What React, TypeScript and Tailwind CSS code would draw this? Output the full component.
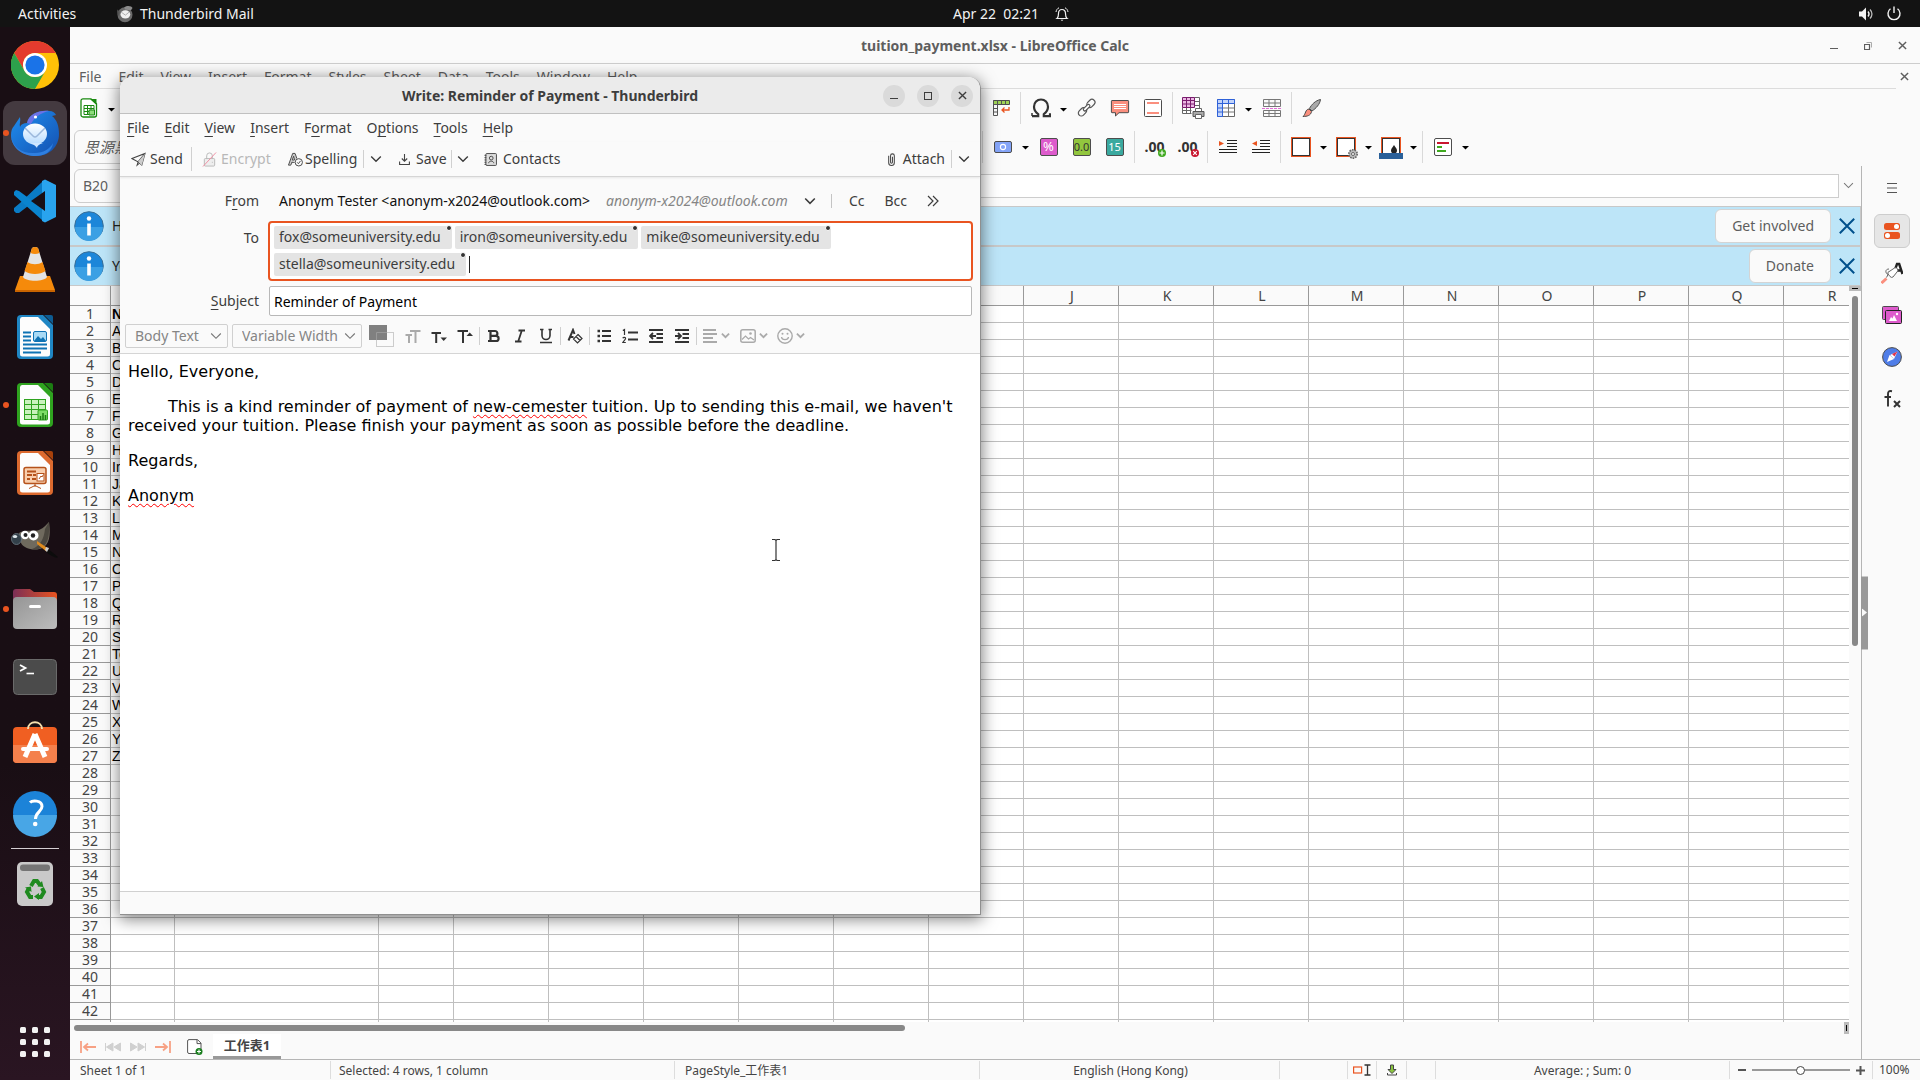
import type { ReactNode } from 'react';

const COLUMNS = [
  { name: 'A', width: 64 },
  { name: 'B', width: 204 },
  { name: 'C', width: 75 },
  ...'DEFGHIJKLMNOPQR'.split('').map((name) => ({ name, width: 95 })),
];

const NAMES = [
  'Name', 'Alex', 'Bob', 'Cathy', 'David', 'Ella', 'Fox', 'Grace', 'Henry', 'Iron', 'Jack', 'Kate', 'Lily', 'Mike',
  'Nancy', 'Oscar', 'Peter', 'Queen', 'Rose', 'Stella', 'Tom', 'Uma', 'Victor', 'Wendy', 'Xavier', 'Yolanda', 'Zoe',
];

const RECIPIENTS = ['fox', 'iron', 'mike', 'stella'].map((n) => `${n}@someuniversity.edu`);

/* ---------- small shared pieces ---------- */

function Icon({ size = 20, box = 20, children }: { size?: number; box?: number; children: ReactNode }) {
  return (
    <svg width={size} height={size} viewBox={`0 0 ${box} ${box}`} fill="none" className="shrink-0" aria-hidden="true">
      {children}
    </svg>
  );
}

function Chevron({ width = 12, color = '#3d3d3d', stroke = 1.4 }: { width?: number; color?: string; stroke?: number }) {
  return (
    <svg width={width} height={width} viewBox="0 0 12 12" fill="none" className="shrink-0" aria-hidden="true">
      <path d="M1.2 3.5 6 8.3l4.8-4.8" stroke={color} strokeWidth={stroke} />
    </svg>
  );
}

function CloseCross({ size = 10, color = '#5e5e5e', stroke = 1.6 }: { size?: number; color?: string; stroke?: number }) {
  return (
    <Icon size={size} box={10}>
      <path d="M1 1l8 8M9 1 1 9" stroke={color} strokeWidth={stroke} />
    </Icon>
  );
}

/* ---------- top bar ---------- */

function TopBar() {
  return (
    <header className="grid h-[27px] shrink-0 grid-cols-3 items-center bg-[#131313] text-sm text-[#f2f2f2]">
      <div className="flex items-center pl-[18px]">
        <button className="w-[98px] text-left">Activities</button>
        <button className="flex items-center gap-1.5">
          <Icon size={18} box={48}>
            <circle cx="24" cy="26" r="20" fill="#6b6b6b" />
            <path d="M22 6c8-6 20-4 22 2l-4 6-16-2z" fill="#8b8b8b" />
            <path d="M4 12l6 6-2 12c-5-5-6-12-4-18z" fill="#555" />
            <ellipse cx="25" cy="25" rx="13" ry="11" fill="#f0f0f0" />
            <path d="M14 19l11 8 10-8" stroke="#999" strokeWidth="2" />
          </Icon>
          Thunderbird Mail
        </button>
      </div>
      <button className="flex items-center justify-center gap-4 pl-[102px]">
        <span className="whitespace-pre">Apr 22  02:21</span>
        <Icon size={14} box={14}>
          <path d="M2 11.5h10c-1.300-1-1.500-2.500-1.500-5 0-2.500-1.500-4-3.500-4s-3.500 1.500-3.500 4c0 2.500-.2 4-1.500 5z" stroke="#f2f2f2" strokeWidth="1.200" />
          <path d="M1 5C1.300 3 2.300 1.500 4 .8M13 5c-.3-2-1.300-3.500-3-4.200" stroke="#f2f2f2" />
          <path d="M5.500 12.800h3L7 14z" fill="#f2f2f2" />
        </Icon>
      </button>
      <div className="flex items-center justify-end gap-3 pr-[18px]">
        <button aria-label="Volume">
          <Icon size={16} box={16}>
            <path d="M1 5.500h3L8 1.500v13L4 10.500H1z" fill="#f2f2f2" />
            <path d="M10 5.500c1.300 1.500 1.300 3.500 0 5" stroke="#f2f2f2" strokeWidth="1.300" />
            <path d="M12 3.500c2.600 2.600 2.600 6.400 0 9" stroke="#bbb" strokeWidth="1.300" />
          </Icon>
        </button>
        <button aria-label="Power">
          <Icon size={16} box={16}>
            <path d="M4.500 2.800a6 6 0 1 0 7 0M8 .5V7" stroke="#f2f2f2" strokeWidth="1.400" />
          </Icon>
        </button>
      </div>
    </header>
  );
}

/* ---------- dock ---------- */

function DocIcon({ dark, light, children }: { dark: string; light: string; children: ReactNode }) {
  return (
    <Icon size={48} box={48}>
      <path d="M10 2h22l10 10v30a4 4 0 0 1-4 4H10a4 4 0 0 1-4-4V6a4 4 0 0 1 4-4z" fill={light} />
      <path d="M11 4h16l12 12v25a2.500 2.500 0 0 1-2.500 2.500h-25A2.500 2.500 0 0 1 9 41V6.500A2.500 2.500 0 0 1 11 4z" fill="#fdfdfd" />
      <path d="M33 2h7a2 2 0 0 1 2 2v7z" fill={dark} />
      {children}
    </Icon>
  );
}

const chromeIcon = (
  <Icon size={48} box={48}>
    <circle cx="24" cy="24" r="24" fill="#ffc107" />
    <path d="M3.200 12A24 24 0 0 1 44.800 12H24a12 12 0 0 0-10.400 18z" fill="#e33b2e" />
    <path d="M3.200 12A24 24 0 0 0 24 48l10.400-18A12 12 0 0 1 13.600 30z" fill="#2da14c" />
    <circle cx="24" cy="24" r="12" fill="#fff" />
    <circle cx="24" cy="24" r="9.600" fill="#1a73e8" />
  </Icon>
);

const thunderbirdIcon = (
  <Icon size={48} box={48}>
    <defs>
      <linearGradient id="tb" x1="0" y1="0" x2="1" y2="1">
        <stop offset="0" stopColor="#1f8ff0" />
        <stop offset="1" stopColor="#1450b0" />
      </linearGradient>
      <linearGradient id="tbm" x1="0" y1="0" x2="0" y2="1">
        <stop offset="0" stopColor="#fff" />
        <stop offset="1" stopColor="#b8dcff" />
      </linearGradient>
    </defs>
    <path d="M16 14C18 5 28 1 38 2c4 0 6 2 7 4l-4 1c5 4 7 10 7 18 0 13-10 22-23 22S0 38 0 26c0-4 1-7 3-9l6-9c1 4-1 7 0 10 1-3 4-4 7-4z" fill="url(#tb)" />
    <path d="M0 25c1 14 12 20 24 19 8 0 15-4 18-10-1 9-9 13-17 13C11 47 0 39 0 25z" fill="#2f7fe0" />
    <path d="M16 14C18 5 28 1 38 2c-9 2-14 6-18 13z" fill="#7f6fe8" opacity=".8" />
    <ellipse cx="24" cy="25" rx="12" ry="10.500" fill="url(#tbm)" />
    <path d="M14 19l8 8q2 2 4 0l8-8" stroke="#9cb8dc" strokeWidth="1.500" />
    <path d="M20 34q5 3 6 5 0-3 6-5" fill="#cfe6ff" />
    <circle cx="24.500" cy="8" r="1.600" fill="#fff" />
  </Icon>
);

const vscodeIcon = (
  <Icon size={48} box={48}>
    <path d="M34 3l-3 1-22 21-6 5v3l2 2 3 0 26-20z" fill="#0a7bc5" transform="translate(0 1)" />
    <path d="M8 14L5 13l-2 2v3l28 25 3 2 0-12z" fill="#0a84cf" />
    <path d="M31 44V4l3-1.500L45 8v32l-11 5.500z" fill="#29a4ee" />
    <path d="M34 14v20L20 24z" fill="#190f15" />
  </Icon>
);

const vlcIcon = (
  <Icon size={48} box={48}>
    <path d="M9 31h30l5 14v2H4v-2z" fill="#f58a0b" />
    <path d="M4 45h40v2H4z" fill="#c96400" />
    <path d="M21 3q3-2 6 0l9 29c-3 5-21 5-24 0z" fill="#e4e4e4" />
    <path d="M21 3q3-2 6 0l1.500 5q-4.500 2-9 0zM16.500 17l-3 9c5 4 16 4 21 0l-3-9c-4 3-11 3-15 0z" fill="#f58a0b" />
  </Icon>
);

const gimpIcon = (
  <Icon size={48} box={48}>
    <path d="M8 16c6-4 14-1 20-3 5-2 8-6 10-8 1 8 2 20-5 25-8 5-20 2-23-4z" fill="#6f6a5e" />
    <path d="M38 5c0 8 1 18-5 24-3 3-8 4-12 3 8-3 12-10 13-20z" fill="#4b473f" />
    <ellipse cx="5.500" cy="22" rx="5" ry="5.500" fill="#33404a" stroke="#6d7b85" strokeWidth=".8" />
    <ellipse cx="4" cy="19.500" rx="2.200" ry="1.500" fill="#dfe7ec" />
    <circle cx="14" cy="18" r="4.200" fill="#fff" />
    <circle cx="22.500" cy="18.500" r="5" fill="#fff" />
    <circle cx="14.500" cy="18" r="2" fill="#222" />
    <circle cx="22" cy="18.500" r="2.200" fill="#222" />
    <path d="M26 24l12 8-2 3-10-8z" fill="#e08b1e" />
    <path d="M36 31l11 9c0 2-9-1-12-6z" fill="#0c0c0c" />
    <path d="M35 30l3 1-2 4-2-2z" fill="#ccc" />
  </Icon>
);

const filesIcon = (
  <Icon size={48} box={48}>
    <defs>
      <linearGradient id="fl" x1="0" y1="0" x2="1" y2="0">
        <stop offset="0" stopColor="#7b2f56" />
        <stop offset="1" stopColor="#e95420" />
      </linearGradient>
      <linearGradient id="flg" x1="0" y1="0" x2="1" y2="1">
        <stop offset="0" stopColor="#959595" />
        <stop offset="1" stopColor="#bdbdbd" />
      </linearGradient>
    </defs>
    <path d="M2 7a3 3 0 0 1 3-3h14l4 3h20a3 3 0 0 1 3 3v10H2z" fill="url(#fl)" />
    <rect x="2" y="12" width="44" height="32" rx="4" fill="url(#flg)" />
    <rect x="18" y="20" width="12" height="3" rx="1.500" fill="#fff" />
  </Icon>
);

const terminalIcon = (
  <Icon size={48} box={48}>
    <rect x="2.500" y="6.500" width="43" height="35" rx="4" fill="#4b4b4b" stroke="#6a6a6a" />
    <path d="M9 12l5.500 3L9 18" stroke="#fff" strokeWidth="1.800" />
    <path d="M15.500 20.500H23" stroke="#fff" strokeWidth="1.600" />
  </Icon>
);

const softwareIcon = (
  <Icon size={48} box={48}>
    <g transform="translate(0 -3)">
      <rect x="2" y="9" width="44" height="36" rx="4" fill="#f05f22" />
      <path d="M2 27h44v14a4 4 0 0 1-4 4H6a4 4 0 0 1-4-4z" fill="#f4804c" />
      <path d="M17 11c0-9 14-9 14 0" stroke="#f6dfae" strokeWidth="1.800" />
      <path d="M24 16L14 39M24 16l10 23" stroke="#fff" strokeWidth="5" />
      <rect x="10" y="29" width="28" height="4" rx="2" fill="#fff" />
    </g>
  </Icon>
);

const helpIcon = (
  <Icon size={48} box={48}>
    <circle cx="24" cy="24" r="22" fill="#1c83d8" />
    <path d="M2 26a22 22 0 0 0 44 0z" fill="#48a6e6" />
    <path d="M19 13.500c2-2 12-3 12 4 0 5-6.500 5.500-6.500 12.500" stroke="#fff" strokeWidth="3" />
    <circle cx="24.200" cy="35" r="2.300" fill="#fff" />
  </Icon>
);

const trashIcon = (
  <Icon size={48} box={48}>
    <rect x="6" y="2" width="36" height="44" rx="5" fill="#c9c9c9" />
    <rect x="9" y="4.500" width="30" height="6.500" rx="3" fill="#757575" />
    <g stroke="#1f8a1f" strokeWidth="4">
      <path d="M20 26l3-5h3l3 4" />
      <path d="M31 28l2 4-3 5h-4" />
      <path d="M22 37h-3l-3-5 2-4" />
    </g>
    <path d="M26.500 26.500l6 .5-1.500-6zM28 33v7l-5-3.500zM14 27.500l6-1 .5 5.500z" fill="#1f8a1f" />
  </Icon>
);

const gridIcon = (
  <Icon size={48} box={48}>
    {[9, 21, 33].map((y) => [9, 21, 33].map((x) => <rect key={`${x}-${y}`} x={x} y={y} width="6" height="6" rx="1.500" fill="#f2f2f2" />))}
  </Icon>
);

const writerIcon = (
  <DocIcon dark="#0d5c93" light="#1f86c4">
    <path d="M12 19.500h8M12 23.500h8M12 27.500h8M12 31.500h24M12 35.500h24M12 39.500h18" stroke="#0f73b4" strokeWidth="2" />
    <rect x="22.500" y="18.500" width="13" height="10" rx="1.500" fill="#a8daf5" stroke="#0f73b4" />
    <path d="M23 28l4-5 3 3 2-2 3 4z" fill="#0f73b4" />
  </DocIcon>
);

const calcIcon = (
  <DocIcon dark="#1c7d12" light="#2fa31f">
    <rect x="13.500" y="18.500" width="21" height="20" fill="#c9f2bd" stroke="#2fa31f" />
    <path d="M13 23.500h22M13 28.500h22M13 33.500h22M20.500 18v21M27.500 18v21" stroke="#2fa31f" />
    <rect x="27" y="29" width="9.500" height="10" rx="1" fill="#7ddc66" stroke="#2fa31f" />
    <path d="M29.500 39v-4M32 39v-7M34.500 39v-5" stroke="#1c7d12" strokeWidth="1.500" />
  </DocIcon>
);

const impressIcon = (
  <DocIcon dark="#a8410b" light="#dc6a2f">
    <rect x="13" y="18.500" width="22" height="16" rx="2" fill="#f9cfae" stroke="#b5521b" strokeWidth="1.500" />
    <path d="M16 22.500h9M16 26h5M22 26h3M16 30h3M21 30h4" stroke="#b5521b" strokeWidth="2" />
    <rect x="26" y="24.500" width="7" height="7.500" fill="#fff" stroke="#b5521b" />
    <path d="M28 30l2-3 1 1 1.500-2.500M24 35v3M18 39.500l6-3 6 3" stroke="#b5521b" />
  </DocIcon>
);

const DOCK = [
  { name: 'Chrome', icon: chromeIcon },
  { name: 'Thunderbird', icon: thunderbirdIcon, active: true, running: true },
  { name: 'VS Code', icon: vscodeIcon },
  { name: 'VLC', icon: vlcIcon },
  { name: 'Writer', icon: writerIcon },
  { name: 'Calc', icon: calcIcon, running: true },
  { name: 'Impress', icon: impressIcon },
  { name: 'GIMP', icon: gimpIcon },
  { name: 'Files', icon: filesIcon, running: true },
  { name: 'Terminal', icon: terminalIcon },
  { name: 'Software', icon: softwareIcon },
  { name: 'Help', icon: helpIcon },
];

function Dock() {
  return (
    <nav className="flex w-[70px] shrink-0 flex-col items-center bg-gradient-to-b from-[#190e14] from-70% to-[#2a1522] py-1.5">
      <div className="flex flex-col gap-1">
        {DOCK.map((app) => (
          <button
            key={app.name}
            aria-label={app.name}
            className={`relative flex size-16 items-center justify-center rounded-xl ${app.active ? 'bg-[#443a40]' : ''}`}
          >
            {app.running && <span className="absolute top-[29px] left-0 size-1.5 rounded-full bg-[#e95420]" />}
            {app.icon}
          </button>
        ))}
      </div>
      <hr className="my-[3px] w-12 border-[#d5cfd3]" />
      <button aria-label="Trash" className="flex size-16 items-center justify-center">{trashIcon}</button>
      <button aria-label="Show Applications" className="mt-auto flex size-16 items-center justify-center">{gridIcon}</button>
    </nav>
  );
}

/* ---------- calc toolbars ---------- */

function Tool({ label, children }: { label: string; children: ReactNode }) {
  return (
    <button aria-label={label} className="flex h-8 w-[33px] shrink-0 items-center justify-center">
      {children}
    </button>
  );
}

function Drop({ narrow }: { narrow?: boolean }) {
  return (
    <button aria-label="More" className={`flex h-8 shrink-0 items-center justify-center ${narrow ? 'w-3' : 'w-[13px]'}`}>
      <svg width="7" height="7" viewBox="0 0 7 7" aria-hidden="true">
        <path d="M0 3h7L3.500 6.500z" fill="#000" />
      </svg>
    </button>
  );
}

function ToolSep() {
  return <span className="mx-[3px] h-8 w-px shrink-0 bg-[#d9d9d9]" />;
}

function BorderBox({ children }: { children?: ReactNode }) {
  return (
    <Icon size={24} box={24}>
      <rect x="2.500" y="2.500" width="19" height="19" fill="#fff" stroke="#e95420" />
      <rect x="3.500" y="3.500" width="17" height="17" stroke="#333" />
      {children}
    </Icon>
  );
}

function CalcToolbars() {
  return (
    <>
      <div className="flex h-[38px] items-center">
        <div className="flex w-[914px] shrink-0 items-center pl-0.5">
          <Tool label="New">
            <Icon>
              <path d="M4 .8h8l5.500 5V17a2 2 0 0 1-2 2H4a2 2 0 0 1-2-2V2.800a2 2 0 0 1 2-2z" fill="#fff" stroke="#1a8a10" strokeWidth="1.300" />
              <path d="M11 1h6.500v6z" fill="#1a8a10" />
              <path d="M5 7.500h10v9H5zM5 10.500h10M5 13.500h10M8.500 7.500v9M12 7.500v9" stroke="#1a8a10" />
              <path d="M10 12h5.500v5H10z" fill="#8edc7c" stroke="#1a8a10" />
            </Icon>
          </Tool>
          <Drop />
        </div>
        <Tool label="Pivot Table">
          <Icon size={20}>
            <path d="M2.500 2.500h16v4h-16z" fill="#9fd355" stroke="#4d4d4d" />
            <path d="M6.500 2.500v15h-4v-15M2.500 6.500h4M2.500 10.500h4M2.500 14h4M10.500 3v3M14.500 3v3" stroke="#555" />
            <path d="M18 9v3h-7M13.500 9.500 11 12l2.500 2.500" stroke="#e95420" strokeWidth="1.300" />
          </Icon>
        </Tool>
        <ToolSep />
        <Tool label="Special Character">
          <Icon size={20}>
            <path d="M1 18.200h6.200v-2C4.500 14.300 3 12 3 8.800 3 4.500 6 1.500 10 1.500s7 3 7 7.300c0 3.200-1.500 5.500-4.200 7.400v2H19v-3" stroke="#333" strokeWidth="2.200" />
            <path d="M1 15v3" stroke="#333" strokeWidth="1.500" />
          </Icon>
        </Tool>
        <Drop />
        <Tool label="Hyperlink">
          <Icon size={20}>
            <g transform="rotate(-45 10 10)" stroke="#555" strokeWidth="1.200">
              <rect x="-.5" y="6.500" width="9" height="6" rx="3" />
              <rect x="11.500" y="6.500" width="9" height="6" rx="3" />
              <rect x="6" y="8" width="8" height="3" rx="1.500" fill="#fff" />
            </g>
          </Icon>
        </Tool>
        <Tool label="Comment">
          <Icon size={20}>
            <path d="M2 2.500h16a.6.600 0 0 1 .6.600v11a.6.600 0 0 1-.6.600H9L5.500 18v-3.300H2a.6.600 0 0 1-.6-.6v-11a.6.600 0 0 1 .6-.6z" fill="#fa8f7e" stroke="#4d4d4d" />
            <path d="M4 6.500h12M4 8.500h12M4 10.500h12" stroke="#fff" />
          </Icon>
        </Tool>
        <Tool label="Headers and Footers">
          <Icon size={20}>
            <rect x="1.500" y="1.500" width="17" height="17" rx="1" fill="#fff" stroke="#4d4d4d" />
            <path d="M4 5h12M4 15h12" stroke="#fa8f7e" strokeWidth="1.800" />
          </Icon>
        </Tool>
        <ToolSep />
        <Tool label="Print Area">
          <Icon size={24} box={24}>
            <path d="M1.500 1.500h17v16h-17z" fill="#fff" />
            <path d="M1.500 1.500h12v10h-12z" fill="#ebb8e4" />
            <path d="M13.500 1.500h5v12M1.500 11.500v6h9M13.500 5.500h5M13.500 9.500h5M1.500 14.500h9M5.500 12v5.500M9.500 12v5.500" stroke="#666" />
            <path d="M1.500 1.500h12v10h-12zM1.500 4.500h12M1.500 8h12M5.500 1.500v10M9.500 1.500v10" stroke="#7a1c6e" />
            <path d="M14.500 12.500h6v3h-6z" fill="#fff" stroke="#666" />
            <path d="M12 15.500h11v5H12z" fill="#aaa" stroke="#555" />
            <path d="M14.500 18.500h6v4h-6z" fill="#fff" stroke="#666" />
          </Icon>
        </Tool>
        <Tool label="Freeze Rows and Columns">
          <Icon size={20}>
            <path d="M1.500 1.500h17v17h-17z" fill="#fff" stroke="#666" />
            <path d="M1.500 1.500h17v4h-17zM1.500 5.500h5v13h-5z" fill="#c3d4fa" />
            <path d="M6.500 10h12M6.500 14h12M12.500 5.500v13" stroke="#777" />
            <path d="M1.500 18.500v-17h17v4h-17M1.500 10h5M1.500 14h5M6.500 1.500v17h-5M12.500 1.500v4" stroke="#2f62d9" />
          </Icon>
        </Tool>
        <Drop />
        <Tool label="Split Window">
          <Icon size={20}>
            <path d="M1.500 1.500h17v7h-17zM1.500 5h17M7 1.500v7M13 1.500v7M1.500 12.500h17v6h-17zM1.500 15.500h17M7 12.500v6M13 12.500v6" stroke="#777" />
            <path d="M0 10.500h20" stroke="#e06bd6" strokeDasharray="3 1" />
          </Icon>
        </Tool>
        <ToolSep />
        <Tool label="Show Draw Functions">
          <Icon size={20}>
            <path d="M18.500 1.500c-5 1-9 5-11 9l2.500 2.500c4-2.500 8-7 8.500-11.500z" fill="#aaa" stroke="#4d4d4d" />
            <path d="M7 11c-4 .5-3 5-6 7.500 4 0 8-1 8.500-5z" fill="#fa8f7e" stroke="#4d4d4d" />
          </Icon>
        </Tool>
      </div>

      <div className="flex h-[39px] items-center">
        <div className="flex w-[909px] shrink-0 items-center pl-1">
          <input
            aria-label="Font name"
            defaultValue="思源黑體"
            className="h-[34px] w-[230px] rounded-md border border-[#cdcdcd] bg-[#fafafa] px-[9px] text-[15px] text-[#5e5e5e] italic outline-none"
          />
        </div>
        <ToolSep />
        <Tool label="Currency">
          <Icon size={20}>
            <rect x="1.500" y="4.500" width="17" height="11" rx="1.500" fill="#84a4f8" stroke="#4d4d4d" />
            <circle cx="10" cy="10" r="2.600" stroke="#fff" strokeWidth="1.100" />
          </Icon>
        </Tool>
        <Drop />
        <Tool label="Percent">
          <span className="flex size-[18px] items-center justify-center rounded-xs border border-[#4d4d4d] bg-[#dd5bcc] text-[13px] leading-none text-white">%</span>
        </Tool>
        <Tool label="Number">
          <span className="flex size-[18px] items-center justify-center rounded-xs border border-[#4d4d4d] bg-[#92c63e] text-[11px] leading-none text-[#333]">0.0</span>
        </Tool>
        <Tool label="Date">
          <span className="flex size-[18px] items-center justify-center rounded-xs border border-[#4d4d4d] bg-[#3aa99f] text-[11px] leading-none text-white">15</span>
        </Tool>
        <ToolSep />
        <Tool label="Add Decimal Place">
          <span className="relative text-[14px] leading-5 font-bold text-[#333]">
            .00
            <svg className="absolute -right-0.5 bottom-0" width="8" height="8" viewBox="0 0 8 8" aria-hidden="true">
              <circle cx="4" cy="4" r="4" fill="#3fa91f" />
              <path d="M4 1.500v5M1.500 4h5" stroke="#fff" strokeWidth="1.200" />
            </svg>
          </span>
        </Tool>
        <Tool label="Delete Decimal Place">
          <span className="relative text-[14px] leading-5 font-bold text-[#333]">
            .00
            <svg className="absolute -right-0.5 bottom-0" width="8" height="8" viewBox="0 0 8 8" aria-hidden="true">
              <circle cx="4" cy="4" r="4" fill="#c9162f" />
              <path d="M2.200 2.200l3.600 3.600M5.800 2.200 2.200 5.800" stroke="#fff" strokeWidth="1.200" />
            </svg>
          </span>
        </Tool>
        <ToolSep />
        <Tool label="Increase Indent">
          <Icon size={20}>
            <path d="M9 3.500h10M9 6.500h10M9 9.500h10M1 12.500h18M1 15.500h18" stroke="#222" strokeWidth="1.200" />
            <path d="M1 4l5 2.500L1 9z" fill="#e95420" />
          </Icon>
        </Tool>
        <Tool label="Decrease Indent">
          <Icon size={20}>
            <path d="M9 3.500h10M9 6.500h10M9 9.500h10M1 12.500h18M1 15.500h18" stroke="#222" strokeWidth="1.200" />
            <path d="M6 4L1 6.500 6 9z" fill="#e95420" />
          </Icon>
        </Tool>
        <ToolSep />
        <Tool label="Borders">
          <BorderBox />
        </Tool>
        <Drop narrow />
        <Tool label="Border Style">
          <BorderBox>
            <circle cx="19" cy="19" r="4.200" fill="#bbb" stroke="#666" strokeDasharray="1.600 1" strokeWidth="1.600" />
            <circle cx="19" cy="19" r="1.500" fill="#fff" stroke="#666" />
          </BorderBox>
        </Tool>
        <Drop narrow />
        <Tool label="Border Color">
          <BorderBox>
            <path d="M15 10c2 3 3 4 3 5.500a3 3 0 0 1-6 0C12 14 13 13 15 10z" fill="#222" />
            <rect y="18" width="24" height="6" fill="#2a6099" />
          </BorderBox>
        </Tool>
        <Drop narrow />
        <ToolSep />
        <Tool label="Conditional">
          <Icon size={20}>
            <rect x="1.500" y="1.500" width="17" height="17" rx="1.500" fill="#fff" stroke="#4d4d4d" />
            <path d="M4 6h12" stroke="#c9162f" strokeWidth="2" />
            <path d="M4 10h5M4 14h9" stroke="#3fa91f" strokeWidth="2" />
          </Icon>
        </Tool>
        <Drop />
      </div>
    </>
  );
}

/* ---------- calc window ---------- */

function InfoBar({ text, action }: { text: string; action: string }) {
  return (
    <div className="flex h-10 items-center border-y border-r border-[#c8c8c8] bg-[#bde5f8] pr-1 pl-1">
      <Icon size={30} box={30}>
        <circle cx="15" cy="15" r="14.300" fill="#1c86d9" stroke="#3b6f96" />
        <path d="M1 16a14 14 0 0 0 28 0z" fill="#3ba0e4" />
        <path d="M15 12.500v12" stroke="#fff" strokeWidth="3.600" />
        <circle cx="15" cy="7.500" r="2.200" fill="#fff" />
      </Icon>
      <span className="ml-2 text-[#222]">{text}</span>
      <button className="mr-[7px] ml-auto h-[34px] rounded-md border border-[#d4d4d4] bg-[#fafafa] px-4 text-[#5e5e5e]">{action}</button>
      <button aria-label="Close" className="flex size-[18px] items-center justify-center">
        <CloseCross size={18} color="#00508c" stroke={1.1} />
      </button>
    </div>
  );
}

function Sheet() {
  return (
    <div className="min-w-0 flex-1 overflow-hidden bg-white">
      <table className="table-fixed border-separate border-spacing-0 leading-4 text-[#444]" style={{ width: 41 + COLUMNS.reduce((s, c) => s + c.width, 0) }}>
        <colgroup>
          <col className="w-[41px]" />
          {COLUMNS.map((c) => (
            <col key={c.name} style={{ width: c.width }} />
          ))}
        </colgroup>
        <thead>
          <tr>
            <th aria-label="Select all" className="h-5 border-r border-b border-[#999] bg-[#fafafa] p-0" />
            {COLUMNS.map((c) => (
              <th key={c.name} className="h-5 border-r border-b border-[#999] bg-[#fafafa] p-0 pl-0.5 font-normal">{c.name}</th>
            ))}
          </tr>
        </thead>
        <tbody>
          {Array.from({ length: 43 }, (_, row) => (
            <tr key={row}>
              <th className="h-[17px] border-r border-b border-[#999] bg-[#fafafa] p-0 font-normal">{row < 42 ? row + 1 : ''}</th>
              {COLUMNS.map((c, i) => (
                <td
                  key={c.name}
                  className={`overflow-hidden border-r border-b border-[#bfbfbf] p-0 pl-px font-['Liberation_Sans'] text-[14px] text-black ${row === 0 ? 'font-bold' : ''}`}
                >
                  {i === 0 ? NAMES[row] : ''}
                </td>
              ))}
            </tr>
          ))}
        </tbody>
      </table>
    </div>
  );
}

function SheetTabs() {
  return (
    <div className="flex h-[25px] items-center pl-2.5">
      <button aria-label="First sheet" className="w-[25px]">
        <Icon size={16} box={16}>
          <path d="M1 2v12M16 8H4M8 4.500 4 8l4 3.500" stroke="#f7a184" strokeWidth="1.800" />
        </Icon>
      </button>
      <button aria-label="Previous sheet" className="w-[25px]">
        <Icon size={16} box={16}>
          <path d="M.5 4v8M8 4v8L1.500 8zM15.500 4v8L9 8z" fill="#d0d0d0" stroke="#d0d0d0" />
        </Icon>
      </button>
      <button aria-label="Next sheet" className="w-[25px]">
        <Icon size={16} box={16}>
          <path d="M15.500 4v8M.5 4v8L7 8zM8 4v8l6.500-4z" fill="#d0d0d0" stroke="#d0d0d0" />
        </Icon>
      </button>
      <button aria-label="Last sheet" className="w-8">
        <Icon size={16} box={16}>
          <path d="M15 2v12M0 8h12M8 4.500 12 8l-4 3.500" stroke="#f7a184" strokeWidth="1.800" />
        </Icon>
      </button>
      <button aria-label="Add sheet" className="w-[26px]">
        <Icon size={16} box={16}>
          <path d="M3 .6h7.500l3.500 3.500V13a1.500 1.500 0 0 1-1.500 1.500H2A1.500 1.500 0 0 1 .6 13V2A1.500 1.500 0 0 1 2 .6z" fill="#fff" stroke="#555" />
          <path d="M10 .6v4h4" stroke="#555" />
          <circle cx="12" cy="12.500" r="3.500" fill="#1a7f1f" />
          <path d="M12 10.500v4M10 12.500h4" stroke="#fff" strokeWidth="1.100" />
        </Icon>
      </button>
      <button className="h-full w-[68px] border-b-[3px] border-[#999] bg-white text-[13px] leading-5 font-bold text-[#444]">工作表1</button>
    </div>
  );
}

const SIDEBAR = [
  {
    name: 'Styles',
    icon: (
      <Icon size={22} box={22}>
        <path d="M12.500 12 16 2h2.200L21.500 12M14 8.500h6" stroke="#222" strokeWidth="2.400" />
        <path d="M9 9l4.500-3q2-1 3 1t-.5 3l-4 5q-1.500 1-3-.5l-2-2.500q-1-2 2-3z" fill="#fff" stroke="#666" />
        <path d="M7 12.500c-3-1.500-3-5.500 1-5.500M7 12.500l-1.500 3" stroke="#666" />
        <path d="M5.500 16.500l-5 4.500" stroke="#fa8f7e" strokeWidth="3" />
      </Icon>
    ),
  },
  {
    name: 'Gallery',
    icon: (
      <Icon size={20}>
        <rect x=".5" y="1.500" width="16" height="13" rx="1" fill="#dd5bcc" stroke="#4d4d4d" />
        <rect x="3.500" y="5.500" width="16" height="13" rx="1" fill="#dd5bcc" stroke="#222" />
        <path d="M7 16l2-4 1.500 1.500L12 10l3 6z" fill="#fff" />
        <circle cx="15" cy="9" r="1.200" fill="#fff" />
      </Icon>
    ),
  },
  {
    name: 'Navigator',
    icon: (
      <Icon size={20}>
        <circle cx="10" cy="10" r="9.400" fill="#4f7de8" stroke="#4d4d4d" />
        <path d="M5 15l2.500-7 4.500 4z" fill="#fff" />
        <path d="M15.500 4.500 8 8l4 4z" fill="#fff" />
        <path d="M15.500 4.500 10 7l2.500 2.500z" fill="#e0344b" />
      </Icon>
    ),
  },
  {
    name: 'Functions',
    icon: (
      <Icon size={20}>
        <path d="M10 2.200C6.500 1.500 6 3 6 5v12.500M2.500 8H9" stroke="#333" strokeWidth="1.900" />
        <path d="M12 12l6 6M18 12l-6 6" stroke="#333" strokeWidth="2" />
      </Icon>
    ),
  },
];

function Sidebar() {
  return (
    <aside className="relative flex w-[59px] shrink-0 flex-col items-center border-l border-[#b5b5b5]">
      <button
        aria-label="Toggle sidebar"
        className="absolute top-1/2 -left-px flex h-[73px] w-[7px] -translate-y-1/2 items-center bg-[#999]"
      >
        <svg width="6" height="8" viewBox="0 0 6 8" aria-hidden="true">
          <path d="M1 0l5 4-5 4z" fill="#fafafa" />
        </svg>
      </button>
      <div className="flex w-full flex-col items-center gap-2 pt-[3px] pl-0.5">
        <button aria-label="Sidebar settings" className="flex h-[37px] w-9 items-center justify-center">
          <Icon size={10} box={10}>
            <path d="M0 .5h10M0 5h10M0 9.500h10" stroke="#555" />
          </Icon>
        </button>
        <button aria-label="Properties" className="flex h-[34px] w-9 items-center justify-center rounded-md border border-[#cdcdcd] bg-[#e6e6e6]">
          <Icon size={16} box={16}>
            <rect width="16" height="7" rx="2.500" fill="#e95420" />
            <rect y="9" width="16" height="7" rx="2.500" fill="#e95420" />
            <circle cx="12.500" cy="3.500" r="2.500" fill="#fff" />
            <circle cx="3.500" cy="12.500" r="2.500" fill="#fff" />
          </Icon>
        </button>
        {SIDEBAR.map((item) => (
          <button key={item.name} aria-label={item.name} className="flex h-[34px] w-9 items-center justify-center">
            {item.icon}
          </button>
        ))}
      </div>
    </aside>
  );
}

function StatusBar() {
  return (
    <footer className="flex h-[21px] shrink-0 items-stretch border-t border-[#b5b5b5] text-[12px] leading-5 whitespace-nowrap text-[#444]">
      <div className="my-px w-[261px] border-r border-[#ddd] pl-2.5">Sheet 1 of 1</div>
      <div className="my-px w-[344px] border-r border-[#ddd] pl-2">Selected: 4 rows, 1 column</div>
      <div className="my-px w-[305px] border-r border-[#ddd] pl-2.5">PageStyle_工作表1</div>
      <div className="my-px w-[300px] border-r border-[#ddd] pl-0.5 text-center">English (Hong Kong)</div>
      <div className="my-px w-[68px] border-r border-[#ddd]" />
      <div className="my-px flex w-[29px] items-center justify-center border-r border-[#ddd]">
        <svg width="18" height="12" viewBox="0 0 18 12" fill="none" aria-hidden="true">
          <rect x=".6" y="3" width="8" height="6" stroke="#e95420" strokeWidth="1.200" />
          <path d="M11.500 1h6M11.500 11h6M14.500 1v10" stroke="#333" strokeWidth="1.300" />
        </svg>
      </div>
      <div className="my-px flex w-[30px] items-center justify-center border-r border-[#ddd]">
        <Icon size={12} box={12}>
          <path d="M4.500 1h3v4.500H10L6 9.500 2 5.500h2.500z" fill="#8bc53f" stroke="#444" />
          <path d="M1.500 9v2h9V9" stroke="#444" />
        </Icon>
      </div>
      <div className="my-px w-[29px] border-r border-[#ddd]" />
      <div className="my-px flex-1 border-r border-[#ddd] text-center">Average: ; Sum: 0</div>
      <div className="my-px flex w-[143px] items-center justify-center gap-1.5 border-r border-[#ddd]">
        <button aria-label="Zoom out" className="h-0.5 w-2 bg-[#555]" />
        <input
          aria-label="Zoom"
          type="range"
          defaultValue={50}
          className="h-0.5 w-[98px] appearance-none bg-[#999] outline-none [&::-webkit-slider-thumb]:size-[9px] [&::-webkit-slider-thumb]:appearance-none [&::-webkit-slider-thumb]:rounded-full [&::-webkit-slider-thumb]:border [&::-webkit-slider-thumb]:border-[#444] [&::-webkit-slider-thumb]:bg-white"
        />
        <button aria-label="Zoom in">
          <Icon size={9} box={9}>
            <path d="M4.500 0v9M0 4.500h9" stroke="#555" strokeWidth="2" />
          </Icon>
        </button>
      </div>
      <div className="w-[47px] pl-1.5">100%</div>
    </footer>
  );
}

function CalcWindow() {
  return (
    <section className="flex min-w-0 flex-1 flex-col bg-[#fafafa] text-sm text-[#5e5e5e]">
      <div className="relative flex h-[37px] shrink-0 items-center justify-center border-b border-[#cdcdcd] pt-px">
        <h1 className="font-bold">tuition_payment.xlsx - LibreOffice Calc</h1>
        <div className="absolute right-[13px] flex">
          <button aria-label="Minimize" className="mr-[26px] h-px w-2 translate-y-[7px] bg-[#5e5e5e]" />
          <button aria-label="Restore" className="mr-[26px]">
            <Icon size={8} box={8}>
              <path d="M.5 2.500h5v5h-5z" stroke="#5e5e5e" strokeWidth="1.200" />
              <path d="M2.500.5h5v5" stroke="#aaa" />
            </Icon>
          </button>
          <button aria-label="Close">
            <CloseCross size={9} />
          </button>
        </div>
      </div>
      <div className="flex h-[25px] shrink-0">
        <nav className="flex flex-1 items-center gap-[17px] border-b border-[#dcdcdc] pt-0.5 pl-[9px]">
          {['File', 'Edit', 'View', 'Insert', 'Format', 'Styles', 'Sheet', 'Data', 'Tools', 'Window', 'Help'].map((m) => (
            <button key={m}>{m}</button>
          ))}
        </nav>
        <button aria-label="Close document" className="flex w-6 items-center pl-1">
          <CloseCross size={9} />
        </button>
      </div>
      <CalcToolbars />
      <div className="flex min-h-0 flex-1">
        <div className="flex min-w-0 flex-1 flex-col">
          <div className="flex h-10 shrink-0 items-center pb-px pl-1">
            <input
              aria-label="Name box"
              defaultValue="B20"
              className="h-[34px] w-[120px] rounded-md border border-[#cdcdcd] bg-[#fafafa] px-2 outline-none"
            />
            <input aria-label="Formula" className="ml-24 h-6 flex-1 border border-[#cdcdcd] bg-white outline-none" />
            <button aria-label="Expand formula bar" className="flex w-[22px] justify-center pr-1">
              <Chevron width={11} color="#777" stroke={1.1} />
            </button>
          </div>
          <InfoBar text="Help us make LibreOffice even better!" action="Get involved" />
          <InfoBar text="Your donations support our worldwide community." action="Donate" />
          <div className="flex min-h-0 flex-1">
            <Sheet />
            <div className="flex w-3 shrink-0 flex-col items-center">
              <div className="flex h-[5px] w-full items-center justify-center bg-[#bbb]">
                <span className="h-px w-1.5 bg-black" />
              </div>
              <div className="mt-[5px] h-[350px] w-1.5 rounded-full bg-[#888]" />
            </div>
          </div>
          <div className="flex h-3 shrink-0 items-center justify-between pr-3 pl-1">
            <div className="h-1.5 w-[831px] rounded-full bg-[#888]" />
            <div className="flex h-3 w-[5px] items-center justify-center bg-[#bbb]">
              <span className="h-1.5 w-px bg-black" />
            </div>
          </div>
          <SheetTabs />
        </div>
        <Sidebar />
      </div>
      <StatusBar />
    </section>
  );
}

/* ---------- compose window ---------- */

function Key({ text, at = 0 }: { text: string; at?: number }) {
  return (
    <span>
      {text.slice(0, at)}
      <span className="underline decoration-1 underline-offset-[3px]">{text[at]}</span>
      {text.slice(at + 1)}
    </span>
  );
}

function Fmt({ label, children }: { label: string; children: ReactNode }) {
  return (
    <button aria-label={label} className="flex h-6 w-[26px] shrink-0 items-center justify-center">
      {children}
    </button>
  );
}

const fmtSep = <span className="mx-px h-[18px] w-px shrink-0 bg-[#cfcfcf]" />;

function FormatBar() {
  return (
    <div className="flex h-[38px] items-center border-b border-[#d5d5d5] pt-0.5 pl-[5px]">
      <div className="relative flex items-center">
        <select aria-label="Paragraph format" className="h-6 w-[103px] appearance-none rounded-xs border border-[#d0d0d0] bg-transparent pl-[9px] text-[#858585]">
          <option>Body Text</option>
        </select>
        <span className="pointer-events-none absolute right-1.5"><Chevron color="#777" stroke={1.1} /></span>
      </div>
      <div className="relative ml-1 flex items-center">
        <select aria-label="Font" className="h-6 w-[130px] appearance-none rounded-xs border border-[#d0d0d0] bg-transparent pl-[9px] text-[#858585]">
          <option>Variable Width</option>
        </select>
        <span className="pointer-events-none absolute right-1.5"><Chevron color="#777" stroke={1.1} /></span>
      </div>
      <button aria-label="Text color" className="mr-1.5 ml-[7px]">
        <svg width="25" height="22" viewBox="0 0 25 22" aria-hidden="true">
          <rect x="7.500" y="7.500" width="17" height="14" fill="#fafafa" stroke="#ccc" />
          <rect width="18" height="15" fill="#808080" />
          <path d="M7.500 15V7.500H18" fill="none" stroke="#999" />
        </svg>
      </button>
      <Fmt label="Reset size">
        <Icon size={16} box={16}>
          <path d="M5 3h10.500M10.500 3v12M.5 7h6.500M4 7v8" stroke="#aaa" strokeWidth="2" />
        </Icon>
      </Fmt>
      <Fmt label="Smaller">
        <Icon size={16} box={16}>
          <path d="M.5 5h9.500M5.200 5v10" stroke="#333" strokeWidth="2" />
          <path d="M9.500 9.500h6.500L12.700 13z" fill="#333" />
        </Icon>
      </Fmt>
      <Fmt label="Larger">
        <Icon size={16} box={16}>
          <path d="M.5 3h10.500M6 3v12" stroke="#333" strokeWidth="2" />
          <path d="M9.500 8h6.500L12.700 4.500z" fill="#333" />
        </Icon>
      </Fmt>
      {fmtSep}
      <Fmt label="Bold">
        <Icon size={16} box={16}>
          <path d="M4.500 3h4.500a2.300 2.300 0 0 1 0 4.800H4.500V3zM4.500 7.800h5.500a2.600 2.600 0 0 1 0 5.200H4.500zM2 3h3M2 13h3" stroke="#333" strokeWidth="2.200" />
        </Icon>
      </Fmt>
      <Fmt label="Italic">
        <Icon size={16} box={16}>
          <path d="M6.500 2.500H13M3 13.500h6.500M9.800 2.500 6.200 13.500" stroke="#333" strokeWidth="1.800" />
        </Icon>
      </Fmt>
      <Fmt label="Underline">
        <Icon size={16} box={16}>
          <path d="M4 1v6.500a4 4 0 0 0 8 0V1M2 1.500h3.500M10.500 1.500H14M2 14.500h12" stroke="#333" strokeWidth="1.600" />
        </Icon>
      </Fmt>
      {fmtSep}
      <Fmt label="Remove styling">
        <Icon size={16} box={16}>
          <path d="M1.500 12.500 6 2l1.500 4M3 9h3.500" stroke="#333" strokeWidth="2" />
          <path d="M11 6.500l4 4-4.500 4.500-4-4zM9 8.500l4 4" stroke="#333" strokeWidth="1.200" />
        </Icon>
      </Fmt>
      {fmtSep}
      <Fmt label="Bulleted list">
        <Icon size={14} box={14}>
          <path d="M5 2h9M5 7h9M5 12h9" stroke="#333" strokeWidth="2" />
          <path d="M.5 2h2.500M.5 7h2.500M.5 12h2.500" stroke="#333" strokeWidth="2.500" />
        </Icon>
      </Fmt>
      <Fmt label="Numbered list">
        <Icon size={16} box={16}>
          <path d="M6 4.500h10M6 11.500h10" stroke="#333" strokeWidth="1.800" />
          <path d="M.8 2.500 2.500 1.500V7M.8 10.300c.5-1.500 3-1.200 2.700.3C3.300 11.800 1.500 13 .8 14.500h3" stroke="#333" strokeWidth="1.200" />
        </Icon>
      </Fmt>
      <Fmt label="Outdent">
        <Icon size={14} box={14}>
          <path d="M0 1h14M7.500 5H14M7.500 9H14M0 13h14M1 7h6M4 4 1 7l3 3" stroke="#333" strokeWidth="1.800" />
        </Icon>
      </Fmt>
      <Fmt label="Indent">
        <Icon size={14} box={14}>
          <path d="M0 1h14M7.500 5H14M7.500 9H14M0 13h14M0 7h5.500M3 4l3 3-3 3" stroke="#333" strokeWidth="1.800" />
        </Icon>
      </Fmt>
      {fmtSep}
      <button aria-label="Align" className="ml-[5px] flex w-[37px] items-center gap-1">
        <Icon size={14} box={14}>
          <path d="M0 1h13M0 5h14M0 9h10M0 13h14" stroke="#aaa" strokeWidth="1.800" />
        </Icon>
        <Chevron width={9} color="#aaa" stroke={2.4} />
      </button>
      <button aria-label="Insert" className="flex w-[37px] items-center gap-[3px]">
        <Icon size={16} box={16}>
          <rect x=".8" y="1.800" width="14.400" height="12.400" rx="2" stroke="#aaa" strokeWidth="1.500" />
          <path d="M2 11.500l3.500-3.500 3 3 2-1.500 3.500 2.500" stroke="#aaa" strokeWidth="1.200" />
          <circle cx="10.500" cy="5.500" r="1.300" fill="#aaa" />
        </Icon>
        <Chevron width={9} color="#aaa" stroke={2.4} />
      </button>
      <button aria-label="Insert smiley" className="flex items-center gap-[3px]">
        <Icon size={16} box={16}>
          <circle cx="8" cy="8" r="7.200" stroke="#aaa" strokeWidth="1.400" />
          <path d="M4.500 9c.5 3.500 6.500 3.500 7 0" stroke="#aaa" strokeWidth="1.300" />
          <circle cx="5.500" cy="5.800" r="1" fill="#aaa" />
          <circle cx="10.500" cy="5.800" r="1" fill="#aaa" />
        </Icon>
        <Chevron width={9} color="#aaa" stroke={2.4} />
      </button>
    </div>
  );
}

function ComposeToolbar() {
  return (
    <div className="flex h-[35px] items-center border-b border-[#d5d5d5] pl-[11px] shadow-[0_1px_2px_rgba(0,0,0,0.08)]">
      <button className="flex w-[60px] items-center gap-1">
        <Icon size={15} box={16}>
          <path d="M1 7 15 1.500 11.500 14 7.500 10.500 1 7zM7.500 10.500 15 1.500M7.500 10.500 6.500 14l2.500-2.200" stroke="#444" strokeWidth="1.100" />
          <path d="M15 1.500 7.500 10.500l4 3.500z" fill="#ccc" />
        </Icon>
        Send
      </button>
      <span className="mr-2.5 h-6 w-px bg-[#d0d0d0]" />
      <button disabled className="flex w-[86px] items-center gap-1 text-[#b8b8b8]">
        <Icon size={15} box={16}>
          <rect x="2.500" y="7" width="11" height="8" rx="1" fill="#eee" stroke="#b8b8b8" />
          <path d="M5 7V4a3 3 0 0 1 6 0v3M10.500 11h1" stroke="#b8b8b8" />
          <path d="M1 15.500 15 .5" stroke="#f08ca0" />
        </Icon>
        Encrypt
      </button>
      <button className="flex w-[75px] items-center gap-0.5">
        <Icon size={15} box={16}>
          <path d="M.5 14 5 1.500h2.500L9.500 7M.5 14h2.500l1-3h3M4.500 8.500h2.500L6 4.500z" fill="#ccc" stroke="#444" />
          <circle cx="11.500" cy="11" r="3.900" fill="#fafafa" stroke="#444" />
          <path d="M9.800 11l1.300 1.500 2.200-3" stroke="#444" />
        </Icon>
        Spelling
      </button>
      <span className="h-[18px] w-px bg-[#d0d0d0]" />
      <button aria-label="Spelling options" className="mr-[17px] ml-1.5"><Chevron /></button>
      <button className="flex w-[52px] items-center gap-1.5">
        <Icon size={11} box={11}>
          <path d="M5.500 0v7M2.800 4.500 5.500 7.200l2.700-2.700M.6 7.500v3h9.800v-3" stroke="#444" strokeWidth="1.100" />
        </Icon>
        Save
      </button>
      <span className="h-[18px] w-px bg-[#d0d0d0]" />
      <button aria-label="Save options" className="mr-[15px] ml-[5px]"><Chevron /></button>
      <button className="flex items-center gap-1.5">
        <Icon size={13} box={14}>
          <rect x="2" y=".6" width="11.400" height="12.800" rx="1" fill="#ddd" stroke="#444" />
          <path d="M.5 2.500h2M.5 5h2M.5 7.500h2M.5 10h2M.5 12.300h2M5 11c0-3 5.500-3 5.500 0" stroke="#444" />
          <circle cx="7.800" cy="5.500" r="2" stroke="#444" />
        </Icon>
        Contacts
      </button>
      <button className="ml-auto flex items-center gap-1">
        <Icon size={15} box={16}>
          <path d="M5 4v7.500a3 3 0 0 0 6 0V4a2 2 0 0 0-4 0v7a1 1 0 0 0 2 0V5" stroke="#444" strokeWidth="1.100" />
        </Icon>
        Attach
      </button>
      <span className="ml-1.5 h-[18px] w-px bg-[#d0d0d0]" />
      <button aria-label="Attach options" className="mr-2.5 ml-1.5"><Chevron /></button>
    </div>
  );
}

function AddressFields() {
  return (
    <div className="flex flex-col pr-[7px]">
      <div className="flex h-11 items-center pt-1">
        <label htmlFor="from" className="w-[139px] shrink-0 text-right"><Key text="From" at={1} /></label>
        <button id="from" className="ml-5 flex items-center text-[#111]">
          Anonym Tester &lt;anonym-x2024@outlook.com&gt;
          <i className="mr-4 ml-4 text-[#858585]">anonym-x2024@outlook.com</i>
          <Chevron stroke={1.6} />
        </button>
        <span className="ml-auto h-[14px] w-px bg-[#c4c4c4]" />
        <button className="ml-[17px]">Cc</button>
        <button className="ml-5">Bcc</button>
        <button aria-label="More addressing fields" className="mr-[34px] ml-5">
          <Icon size={12} box={12}>
            <path d="M1 1l5 5-5 5M6 1l5 5-5 5" stroke="#3d3d3d" strokeWidth="1.200" />
          </Icon>
        </button>
      </div>
      <div className="flex">
        <label htmlFor="to" className="w-[139px] shrink-0 pt-[7px] text-right">To</label>
        <div className="ml-[9px] flex flex-1 flex-wrap gap-x-[3px] gap-y-1 rounded-sm border-2 border-[#e95420] bg-white px-1 py-[3px]">
          {RECIPIENTS.map((r) => (
            <span key={r} className="relative h-[23px] rounded-xs bg-[#e4e4e4] pr-[11px] pl-[5px] leading-[22px]">
              {r}
              <span className="absolute -top-px right-0 size-1.5 rounded-full border border-white bg-[#333]" />
            </span>
          ))}
          <input id="to" className="my-[3px] h-[17px] w-40 border-l border-[#222] bg-transparent outline-none" />
        </div>
      </div>
      <div className="mt-[5px] flex items-center">
        <label htmlFor="subject" className="w-[139px] shrink-0 text-right"><Key text="Subject" /></label>
        <input
          id="subject"
          defaultValue="Reminder of Payment"
          className="mr-px ml-2.5 h-[30px] flex-1 rounded-xs border border-[#b8b8b8] bg-white px-1 text-black outline-none"
        />
      </div>
    </div>
  );
}

function ComposeWindow() {
  const round = 'flex size-[22px] items-center justify-center rounded-full bg-[#dadada]';
  const menus: [string, number][] = [['File', 0], ['Edit', 0], ['View', 0], ['Insert', 0], ['Format', 1], ['Options', 1], ['Tools', 0], ['Help', 0]];
  return (
    <section className="absolute top-[50px] left-[120px] flex h-[838px] w-[861px] flex-col overflow-hidden rounded-t-xl border-r border-b border-[#8f8f8f] bg-[#fafafa] text-sm text-[#3d3d3d] shadow-[0_3px_16px_1px_rgba(0,0,0,0.5)]">
      <div className="relative flex h-[37px] shrink-0 items-center justify-center border-b border-[#c0c0c0] bg-[#ebebeb] pt-px">
        <h2 className="font-bold">Write: Reminder of Payment - Thunderbird</h2>
        <div className="absolute right-[7px] flex gap-3">
          <button aria-label="Minimize" className={round}>
            <span className="mt-[5px] h-px w-2 bg-[#3d3d3d]" />
          </button>
          <button aria-label="Maximize" className={round}>
            <span className="size-2 border border-[#3d3d3d]" />
          </button>
          <button aria-label="Close" className={round}>
            <CloseCross size={9} color="#3d3d3d" stroke={1.5} />
          </button>
        </div>
      </div>
      <nav className="flex h-7 shrink-0 items-center gap-[15px] pl-[7px]">
        {menus.map(([m, at]) => (
          <button key={m}><Key text={m} at={at} /></button>
        ))}
      </nav>
      <ComposeToolbar />
      <AddressFields />
      <FormatBar />
      <div
        contentEditable
        suppressContentEditableWarning
        spellCheck={false}
        role="textbox"
        aria-label="Message body"
        className="flex flex-1 flex-col gap-4 bg-white p-2 font-['DejaVu_Sans'] text-base leading-[19px] text-black outline-none"
      >
        <p>Hello, Everyone,</p>
        <p className="indent-10">
          This is a kind reminder of payment of{' '}
          <span className="underline decoration-[#f00] decoration-wavy decoration-1 underline-offset-2">new-cemester</span> tuition. Up to sending this
          e-mail, we haven't received your tuition. Please finish your payment as soon as possible before the deadline.
        </p>
        <p>Regards,</p>
        <p>
          <span className="underline decoration-[#f00] decoration-wavy decoration-1 underline-offset-2">Anonym</span>
        </p>
      </div>
      <div className="h-[23px] shrink-0 border-t border-[#d0d0d0]" />
    </section>
  );
}

export default function App() {
  return (
    <div className="flex h-screen flex-col overflow-hidden font-['Noto_Sans','Noto_Sans_CJK_SC',sans-serif]">
      <TopBar />
      <main className="relative flex min-h-0 flex-1">
        <Dock />
        <CalcWindow />
        <ComposeWindow />
        <svg className="absolute top-[511px] left-[771px]" width="10" height="24" viewBox="0 0 10 24" fill="none" aria-hidden="true">
          <path d="M1 1.500h3l1 1 1-1h3M1 22.500h3l1-1 1 1h3M5 2v20" stroke="#fff" strokeWidth="3" />
          <path d="M1 1.500h3l1 1 1-1h3M1 22.500h3l1-1 1 1h3M5 2v20" stroke="#333" strokeWidth="1.200" />
        </svg>
      </main>
    </div>
  );
}
